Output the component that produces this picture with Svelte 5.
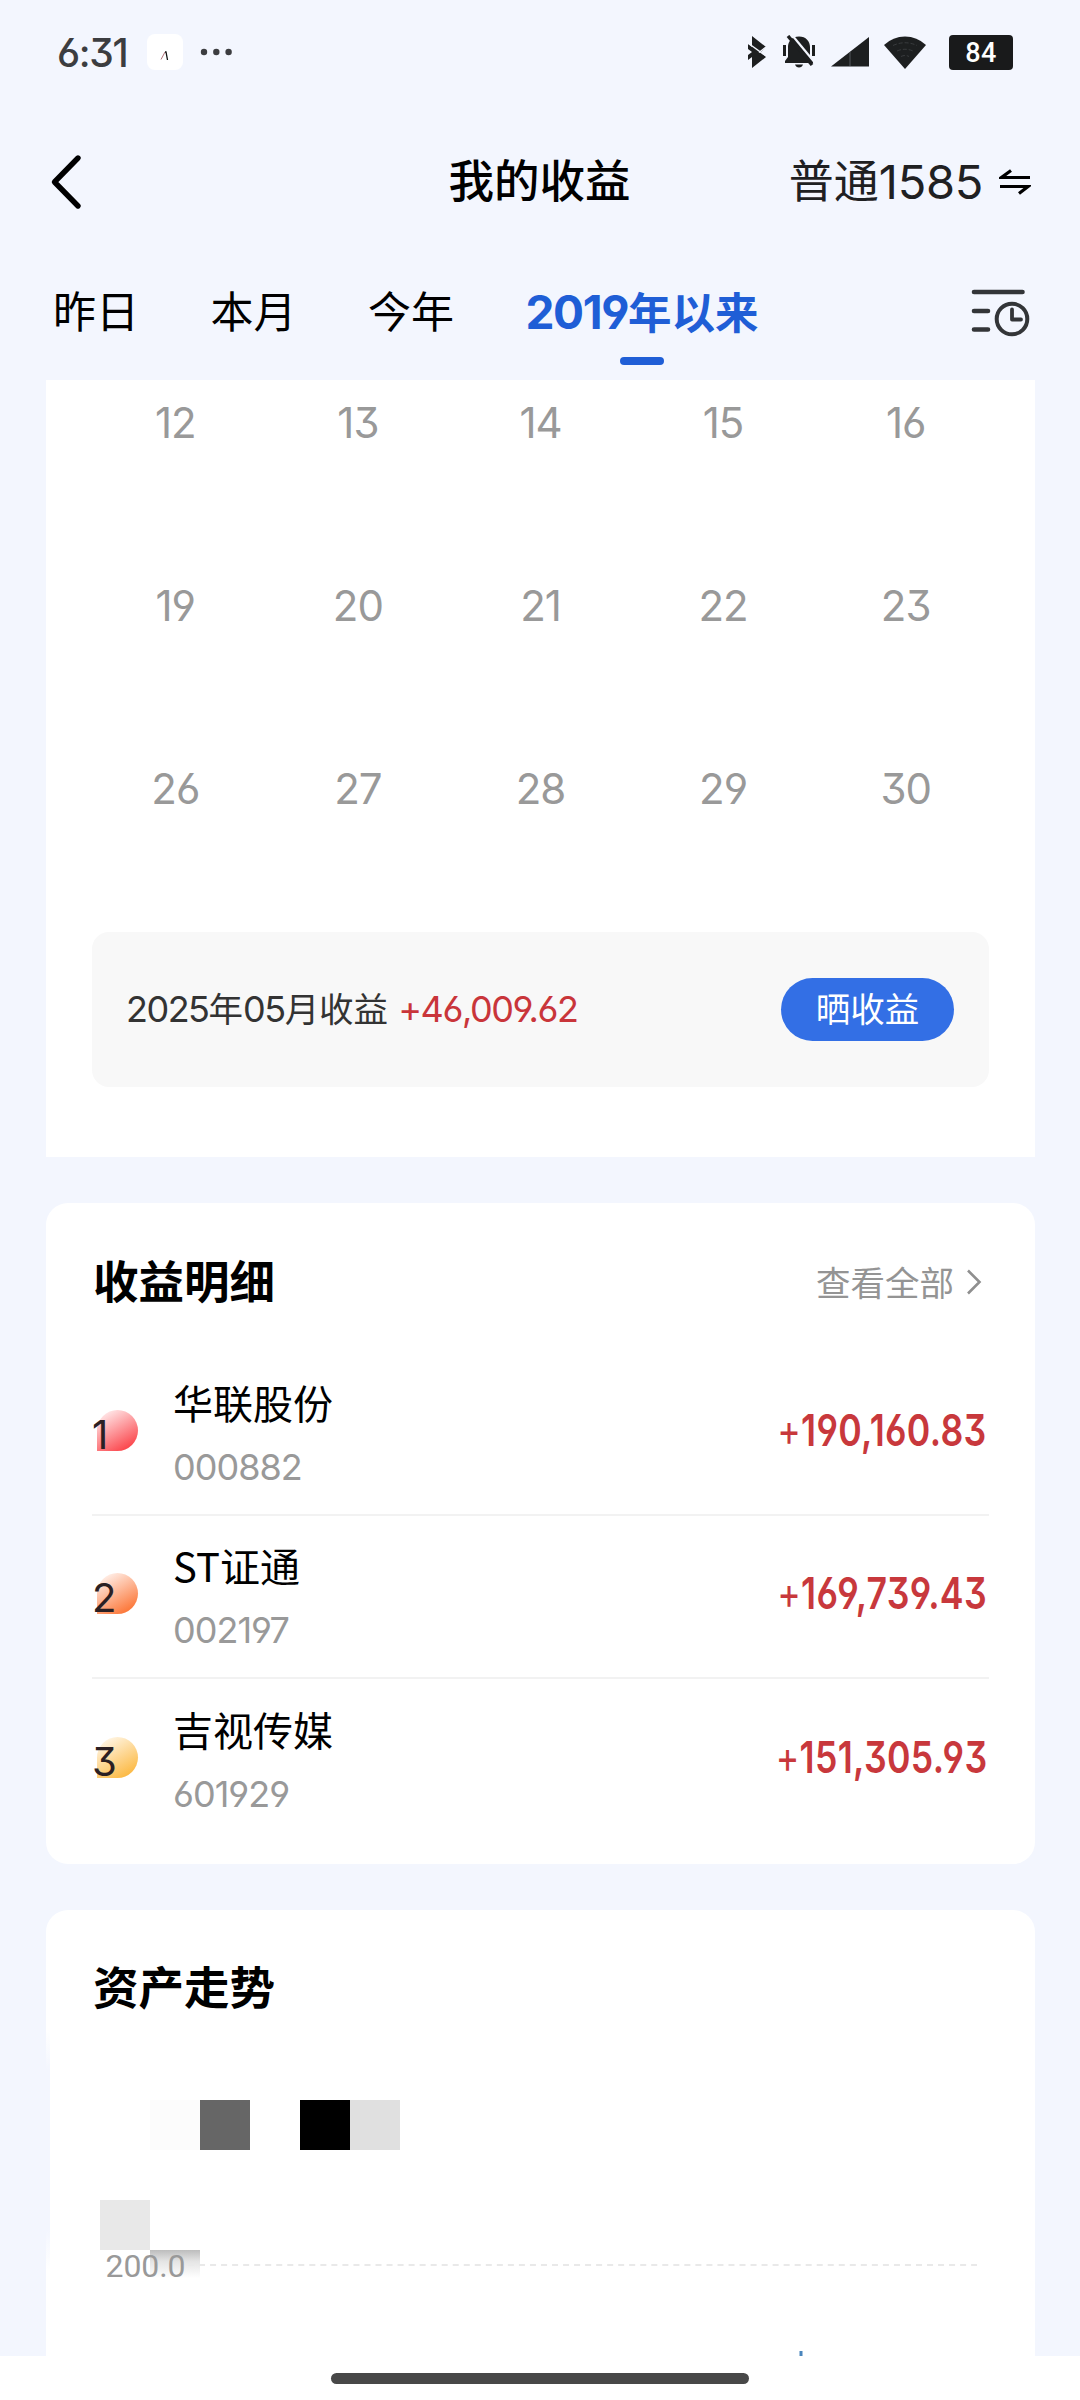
<script lang="ts">
	const tabs = ['昨日', '本月', '今年', '2019年以来'];
	let active = 3;

	const weeks = [
		[12, 13, 14, 15, 16],
		[19, 20, 21, 22, 23],
		[26, 27, 28, 29, 30]
	];

	const stocks = [
		{ name: '华联股份', code: '000882', profit: '190,160.83', from: '#ffe9ea', to: '#fb4a50' },
		{ name: 'ST证通', code: '002197', profit: '169,739.43', from: '#fff0ea', to: '#fc7a3d' },
		{ name: '吉视传媒', code: '601929', profit: '151,305.93', from: '#fff6e6', to: '#fcbb48' }
	];
</script>

<div class="screen">
	<div class="status">
		<span class="time">6:31</span>
		<span class="app-icon">
			<svg width="10" height="12" viewBox="0 0 10 12" fill="none">
				<path d="M1 9.5 5 2" stroke="#b07078" stroke-width="1" />
				<path d="M5 2h1l1.5 8" stroke="#111" stroke-width="1.3" />
			</svg>
		</span>
		<svg class="more" width="34" height="8" viewBox="0 0 34 8" fill="#3c3d40">
			<circle cx="4" cy="4" r="3.2" />
			<circle cx="16.3" cy="4" r="3.2" />
			<circle cx="28.6" cy="4" r="3.2" />
		</svg>
		<div class="status-icons">
			<svg width="20" height="32" viewBox="0 0 20 32">
				<path d="M5 0 19 11 14 16 19 21 5 32V21L1 24V19L5 16 1 13V8L5 11Z" fill="#1d1f20" />
				<path d="M1 7 19 20M12 16.5 19 11" stroke="#f3f6fe" stroke-width="1.400" />
			</svg>
			<svg width="34" height="34" viewBox="0 0 34 34">
				<path
					d="M17 1.500C24 1.500 28 6.500 28 12V22L31 26V28H3V26L6 22V12C6 6.500 10 1.500 17 1.500Z"
					fill="#1d1f20"
				/>
				<path d="M13 29.500h8q-1 3-4 3t-4-3Z" fill="#1d1f20" />
				<path d="M2.500 10v11M31.500 10v11" stroke="#1d1f20" stroke-width="3" />
				<path d="M10 0 34 29" stroke="#f3f6fe" stroke-width="2.200" />
				<path d="M6 1 30 30" stroke="#1d1f20" stroke-width="3.400" />
			</svg>
			<svg width="38" height="30" viewBox="0 0 38 30">
				<path d="M0 29.500 38 0V29.500Z" fill="#1d1f20" />
				<path d="M19 15v14" stroke="#55585c" stroke-width="1" />
			</svg>
			<svg width="42" height="33" viewBox="0 0 42 33">
				<path d="M0 9Q9 .5 21 .5T42 9L21 33Z" fill="#1d1f20" />
				<path
					d="M9 9.500q12-5.500 24 0M13 15q8-3.500 16 0M17 20.500q4-2 8 0"
					fill="none"
					stroke="#45484b"
					stroke-width=".7"
					stroke-dasharray="4 2"
				/>
			</svg>
			<span class="battery">84</span>
		</div>
	</div>

	<header class="nav">
		<svg class="back" width="34" height="58" viewBox="0 0 34 58" fill="none">
			<path
				d="M30 5 6.500 29 30 53"
				stroke="#000"
				stroke-width="5.400"
				stroke-linecap="round"
				stroke-linejoin="round"
			/>
		</svg>
		<h1>我的收益</h1>
		<div class="account">
			<span>普通</span><span class="number">1585</span>
			<svg width="32" height="26" viewBox="0 0 32 26" fill="none" stroke="#000" stroke-width="3.200">
				<path d="M31 8.500H2.500L12 1.500M1 17.500H29L20 24.500" />
			</svg>
		</div>
	</header>

	<nav class="tabs">
		{#each tabs as tab, i}
			<button class:active={active === i} on:click={() => (active = i)}>
				{#if i === 3}<span class="year">2019</span>年以来{:else}{tab}{/if}
			</button>
		{/each}
		<svg class="filter" width="60" height="50" viewBox="0 0 60 50" fill="none" stroke="#333538">
			<path
				d="M4 5H52.500M4 24H18M4 42.500H18"
				stroke-width="4.600"
				stroke-linecap="round"
			/>
			<circle cx="42" cy="32" r="15.300" stroke-width="4" />
			<path d="M42 22.500V32.500H51" stroke-width="3.800" stroke-linecap="round" stroke-linejoin="round" />
		</svg>
	</nav>

	<main>
		<section class="calendar">
			<div class="days">
				{#each weeks as week}
					{#each week as day}
						<span>{day}</span>
					{/each}
				{/each}
			</div>
			<div class="summary">
				<p><span class="n">2025</span>年<span class="n">05</span>月收益</p>
				<span class="gain">+46,009.62</span>
				<button class="share">晒收益</button>
			</div>
		</section>

		<section class="card detail">
			<div class="card-head">
				<h2>收益明细</h2>
				<span class="all">
					查看全部
					<svg width="16" height="28" viewBox="0 0 16 28" fill="none">
						<path d="M2 2.500 13.500 14 2 25.500" stroke="#8f8f8f" stroke-width="2.600" />
					</svg>
				</span>
			</div>
			<ul>
				{#each stocks as stock, i}
					<li>
						<span class="rank" style="--from: {stock.from}; --to: {stock.to}">
							<b>{i + 1}</b>
						</span>
						<div class="stock">
							<span class="name">{stock.name}</span>
							<span class="code">{stock.code}</span>
						</div>
						<span class="profit"><span class="plus">+</span>{stock.profit}</span>
					</li>
				{/each}
			</ul>
		</section>

		<section class="card trend">
			<h2>资产走势</h2>
			<!-- amounts hidden behind mosaic blocks -->
			<svg class="chart" width="989" height="296" viewBox="46 2060 989 296">
				<defs>
					<linearGradient id="fade" x1="0" y1="0" x2="0" y2="1">
						<stop offset="0" stop-color="#bdbdbd" />
						<stop offset=".4" stop-color="#e4e4e4" />
						<stop offset="1" stop-color="#fff" />
					</linearGradient>
				</defs>
				<rect x="150" y="2100" width="50" height="50" fill="#fcfcfc" />
				<rect x="200" y="2100" width="50" height="50" fill="#666" />
				<rect x="300" y="2100" width="50" height="50" fill="#000" />
				<rect x="350" y="2100" width="50" height="50" fill="#e0e0e0" />
				<rect x="100" y="2200" width="50" height="50" fill="#e8e8e8" />
				<rect x="150" y="2250" width="50" height="28" fill="url(#fade)" />
				<path d="M188 2265H977" stroke="#e9e9e9" stroke-width="2" stroke-dasharray="6 5.030" />
				<text x="105.500" y="2277" textLength="80">200.0</text>
				<rect x="799.500" y="2351" width="3" height="5" fill="#4b86bd" />
			</svg>
		</section>
	</main>

	<footer><span></span></footer>
</div>

<style>
	:global(body) {
		margin: 0;
	}

	.screen {
		display: flex;
		flex-direction: column;
		width: 1080px;
		height: 2400px;
		overflow: hidden;
		background: #f3f6fe;
		font-family: Inter, 'Noto Sans CJK SC', sans-serif;
		font-feature-settings: 'cv03', 'cv04', 'cv09';
		color: #000;
	}

	h1,
	h2,
	p,
	ul {
		margin: 0;
		padding: 0;
	}

	button {
		padding: 0;
		border: 0;
		background: none;
		font: inherit;
		color: inherit;
	}

	svg {
		display: block;
		flex: none;
	}

	.status {
		display: flex;
		align-items: center;
		box-sizing: border-box;
		height: 104px;
		padding: 0 67px 0 57px;
	}

	.time {
		width: 90px;
		font-size: 39px;
		font-weight: 500;
		letter-spacing: -1.3px;
		color: #3c3d40;
	}

	.app-icon {
		display: flex;
		justify-content: center;
		align-items: center;
		box-sizing: border-box;
		width: 36px;
		height: 36px;
		padding-top: 8px;
		border-radius: 8px;
		background: #fff;
	}

	.more {
		margin-left: 17px;
	}

	.status-icons {
		display: flex;
		align-items: center;
		margin-left: auto;
	}

	.status-icons svg + svg {
		margin-left: 15px;
	}

	.battery {
		width: 64px;
		height: 35px;
		margin-left: 23px;
		border-radius: 4px;
		background: #191a1b;
		font-family: Roboto, sans-serif;
		font-size: 27px;
		font-weight: 500;
		line-height: 36px;
		letter-spacing: 0.5px;
		text-align: center;
		color: #fff;
	}

	.nav {
		display: grid;
		grid-template-columns: 1fr auto 1fr;
		align-items: center;
		box-sizing: border-box;
		height: 154px;
		padding: 2px 49px 0 48px;
	}

	h1 {
		font-size: 45.5px;
		font-weight: 500;
		line-height: 60px;
	}

	.account {
		display: flex;
		justify-content: flex-end;
		align-items: center;
		font-size: 45px;
		line-height: 60px;
		color: #1f2022;
	}

	.account .number {
		font-size: 47px;
		letter-spacing: -0.3px;
	}

	.account svg {
		margin-left: 16px;
	}

	.tabs {
		display: flex;
		align-items: center;
		height: 108px;
		padding: 0 50px 14px 53px;
	}

	.tabs button {
		position: relative;
		margin-right: 71.5px;
		font-size: 43px;
		line-height: 60px;
		white-space: nowrap;
	}

	.tabs button.active {
		margin-right: 0;
		font-size: 43.5px;
		font-weight: 700;
		color: #1f5ed6;
	}

	.year {
		font-size: 46px;
		letter-spacing: -1.4px;
	}

	.tabs button.active::after {
		content: '';
		position: absolute;
		left: 50%;
		bottom: -22px;
		width: 44px;
		height: 8px;
		margin-left: -22px;
		border-radius: 4px;
		background: #1f5ed6;
	}

	.filter {
		margin-left: auto;
	}

	main {
		display: flex;
		flex-direction: column;
		gap: 46px;
		height: 1976px;
		padding: 0 45px 0 46px;
		overflow: hidden;
	}

	.calendar {
		flex: none;
		height: 777px;
		background: #fff;
		overflow: hidden;
	}

	.days {
		display: grid;
		grid-template-columns: repeat(5, 1fr);
		grid-auto-rows: 183px;
		align-items: center;
		margin-top: -49px;
		padding: 0 38px;
		font-size: 42px;
		letter-spacing: -1px;
		text-align: center;
		color: #999;
	}

	.summary {
		display: flex;
		align-items: center;
		box-sizing: border-box;
		height: 155px;
		margin: 52px 46px 0;
		padding: 0 35px 0 34px;
		border-radius: 17px;
		background: #f8f8f8;
		font-size: 34.5px;
		line-height: 50px;
		color: #333;
	}

	.n {
		font-size: 36px;
		letter-spacing: -1.5px;
	}

	.gain {
		margin: 0 0 2px 10px;
		font-size: 36px;
		letter-spacing: -1.4px;
		color: #c9353a;
	}

	.share {
		width: 173px;
		height: 63px;
		margin-left: auto;
		border-radius: 32px;
		background: #336fe5;
		color: #fff;
	}

	.card {
		flex: none;
		box-sizing: border-box;
		border-radius: 22px;
		background: #fff;
	}

	.detail {
		height: 661px;
		padding: 0 46px;
	}

	.card-head {
		display: flex;
		justify-content: space-between;
		align-items: center;
		box-sizing: border-box;
		height: 150px;
		padding: 9px 7px 0 1px;
	}

	h2 {
		font-size: 45.5px;
		font-weight: 700;
		line-height: 60px;
	}

	.all {
		display: flex;
		align-items: center;
		gap: 12px;
		margin-bottom: 4px;
		font-size: 34.5px;
		color: #949494;
	}

	.all svg {
		margin-top: 3px;
	}

	ul {
		list-style: none;
	}

	li {
		display: flex;
		align-items: center;
		box-sizing: border-box;
		height: 163px;
		border-bottom: 2px solid #f2f2f2;
	}

	li:last-child {
		border-bottom: 0;
	}

	.rank {
		width: 41px;
		height: 41px;
		margin: 0 35px 6px 5px;
		border-radius: 50% 50% 50% 0;
		background: linear-gradient(150deg, var(--from) 10%, var(--to) 85%);
		color: #2b2023;
	}

	.rank b {
		display: block;
		margin-left: -5px;
		padding-top: 3px;
		font-size: 40px;
		font-weight: 400;
		line-height: 44px;
	}

	.stock {
		display: flex;
		flex-direction: column;
		gap: 13px;
	}

	.name {
		font-family: 'Noto Sans CJK SC', sans-serif;
		font-size: 40px;
		line-height: 54px;
	}

	.code {
		font-size: 36px;
		line-height: 50px;
		letter-spacing: -1px;
		color: #999;
	}

	.profit {
		margin: 0 2px 8px auto;
		font-size: 44px;
		font-weight: 600;
		letter-spacing: 0.4px;
		transform: scaleX(0.81);
		transform-origin: right;
		color: #c8383c;
	}

	.plus {
		font-weight: 400;
	}

	.trend {
		position: relative;
		height: 480px;
		padding-top: 49px;
	}

	.trend::before {
		content: '';
		position: absolute;
		left: 0;
		top: 120px;
		width: 4px;
		height: 240px;
		background: linear-gradient(transparent, #f3f6fe 40px, #f3f6fe 200px, transparent);
	}

	.trend h2 {
		padding-left: 47px;
	}

	.chart {
		margin-top: 41px;
	}

	.chart text {
		font-family: Roboto, sans-serif;
		font-size: 32px;
		fill: #999;
	}

	footer {
		display: flex;
		justify-content: center;
		height: 44px;
		background: #fff;
	}

	footer span {
		width: 418px;
		height: 11px;
		margin-top: 17px;
		border-radius: 6px;
		background: #484848;
	}
</style>
